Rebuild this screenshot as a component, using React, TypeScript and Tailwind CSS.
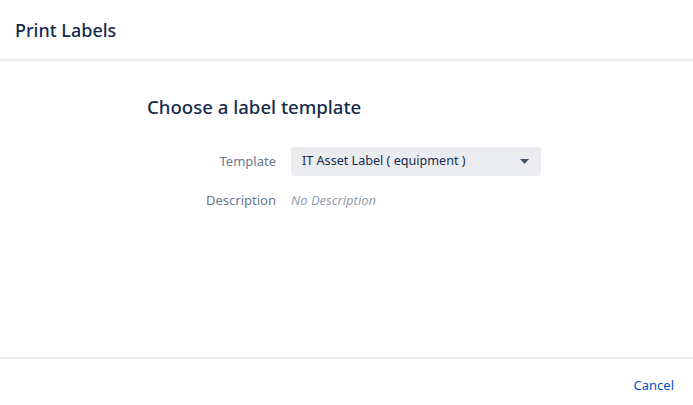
import React from "react";

export default function App() {
  return (
    <div
      className="w-[693px] h-[405px] bg-white flex flex-col text-[#172b4d]"
      style={{ fontFamily: '"Noto Sans", "Open Sans", sans-serif' }}
    >
      <div className="h-[61px] shrink-0 border-b-2 border-[#ebecf0] flex items-center px-[15px]">
        <h1 className="text-[18px] font-medium text-[#172b4d] leading-none mt-[1px]">Print Labels</h1>
      </div>
      <div className="flex-1 pl-[147px] pt-[33px]">
        <h2 className="text-[18.6px] font-medium leading-[26px] text-[#172b4d]">Choose a label template</h2>
        <div className="mt-[27px] flex flex-col gap-[14px]">
          <div className="flex items-center">
            <div className="w-[129px] text-right text-[13px] text-[#6b778c]">Template</div>
            <div className="ml-[15px] w-[250px] h-[29px] rounded-[3px] bg-[#ebecf0] flex items-center justify-between pl-[11px] pr-[12px]">
              <span className="text-[12.6px] text-[#172b4d]">IT Asset Label ( equipment )</span>
              <svg width="9" height="5" viewBox="0 0 9 5"><path d="M0 0h9L4.5 5z" fill="#42526e" /></svg>
            </div>
          </div>
          <div className="flex items-center h-[22px]">
            <div className="w-[129px] text-right text-[13px] text-[#6b778c]">Description</div>
            <div className="ml-[15px] text-[13px] italic text-[#97a0af]">No Description</div>
          </div>
        </div>
      </div>
      <div className="h-[48px] shrink-0 border-t-2 border-[#ebecf0] flex items-center justify-end pr-[19px]">
        <span className="text-[13px] text-[#0052cc] mt-[8px]">Cancel</span>
      </div>
    </div>
  );
}
